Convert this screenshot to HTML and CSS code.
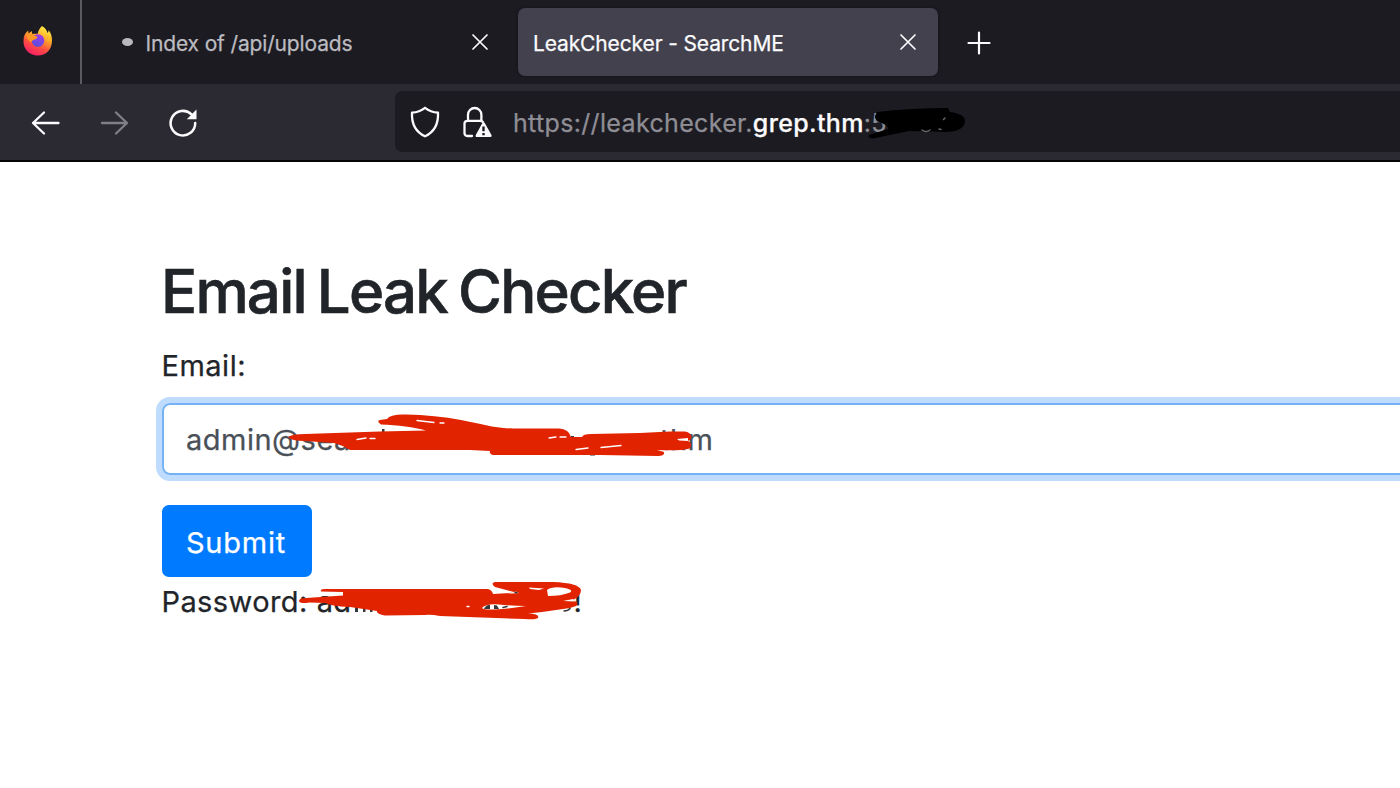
FILE: index.html
```html
<!DOCTYPE html>
<html lang="en">
<head>
<meta charset="utf-8">
<title>LeakChecker - SearchME</title>
<link rel="stylesheet" href="styles.css">
</head>
<body>
<header class="tabs">
  <div class="pinned">
    <svg class="fox" width="30" height="30" viewBox="0 0 30 30">
      <defs>
        <linearGradient id="flame" x1="0.75" y1="0" x2="0.3" y2="1"><stop offset="0" stop-color="#fff04a"/><stop offset=".35" stop-color="#ffae28"/><stop offset=".68" stop-color="#ff4b43"/><stop offset="1" stop-color="#f51c68"/></linearGradient>
        <linearGradient id="globe" x1=".7" y1="0" x2=".4" y2="1"><stop offset="0" stop-color="#a739e8"/><stop offset="1" stop-color="#554fdb"/></linearGradient>
      </defs>
      <path d="M19 0c4 2.500 5 5 5.500 7 1-.8 1.200-2 1-3 2.500 3 3.500 6 3.500 10.500 0 9-6 15-14.200 15C6 29.500.3 23 .5 15 .6 10 2 7 5.200 4.500l.4 3 3-2.500.9 3.200c1.800-.6 3.500-.6 5-.2C15.300 5 16.500 2 19 0Z" fill="url(#flame)"/>
      <circle cx="15" cy="14.500" r="6.300" fill="url(#globe)"/>
      <path d="M3 8c3-.6 6 .2 7.500 1.700 1.500-.2 3 .2 4 1.500-.5 1.600-2.700 2-4.300 3-1 .3-2 1-2.700 2C5 14.500 3.300 11 3 8Z" fill="#ff9726"/>
    </svg>
  </div>
  <div class="tab">
    <span class="loading"></span>
    <span class="tab-title idle">Index of /api/uploads</span>
    <svg class="close" width="18" height="18" viewBox="0 0 18 18"><path d="M2 2 16 16M16 2 2 16"/></svg>
  </div>
  <div class="tab active">
    <span class="tab-title">LeakChecker - SearchME</span>
    <svg class="close" width="18" height="18" viewBox="0 0 18 18"><path d="M2 2 16 16M16 2 2 16"/></svg>
  </div>
  <svg class="plus" width="24" height="24" viewBox="0 0 24 24"><path d="M12 1.500V22.500M1.500 12H22.500"/></svg>
</header>
<nav class="toolbar">
  <svg class="nav-icon back" width="30" height="26" viewBox="0 0 30 26"><path d="M27.500 13H2M13 2.500 2 13 13 23.500"/></svg>
  <svg class="nav-icon forward" width="30" height="26" viewBox="0 0 30 26"><path d="M2 13H27M16 2.500 27 13 16 23.500"/></svg>
  <svg class="nav-icon reload" width="30" height="30" viewBox="0 0 30 30"><path d="M27.200 15A12.300 12.300 0 1 1 23.500 6.400"/><path class="solid" d="M28.500 1.500V11.200H18.800Z"/></svg>
  <div class="address">
    <svg class="shield" width="30" height="32" viewBox="0 0 30 32"><path d="M15 1.800C11.500 4.500 6.700 6.300 2 6.700 1.500 17.500 6 26 15 30.300 24 26 28.500 17.500 28 6.700 23.300 6.300 18.500 4.500 15 1.800Z"/></svg>
    <svg class="lock" width="30" height="32" viewBox="0 0 30 32"><path d="M9 30H4.500Q1.500 30 1.500 27V17.500Q1.500 14.800 4.500 14.800H17Q19.500 14.800 20 16M5 14.500V8.700A6.700 6.700 0 0 1 18.400 8.700V14.500"/><path class="solid" d="M20.500 16.200Q21.300 16.200 21.900 17.200L28.500 29Q29.200 31 27.500 31H14Q12 31 12.800 29L19.200 17.200Q19.700 16.200 20.500 16.200Z"/><path class="bang" d="M20.500 20.500V25.300M20.500 27V29.200"/></svg>
    <span class="url">https://leakchecker.<b>grep.thm</b>:5</span>
  </div>
</nav>
<main class="page">
  <h1 class="heading">Email Leak Checker</h1>
  <label class="label" for="email">Email:</label>
  <div class="field" id="email"><span class="mail-start">admin@sea</span><span class="mail-end">thm</span></div>
  <button class="submit">Submit</button>
  <p class="result"><span class="pw-label">Password:</span><span class="pw-start">ad</span><span class="pw-end">!</span></p>
</main>
<svg class="ink" width="1400" height="788" viewBox="0 0 1400 788">
  <path class="crumbs-grey" d="M893 124.500h6l-3 5Z"/>
  <path class="black" d="M877 112Q910 108 948 108L950 112Q965 114 965 121 964 132 945 132Q922 131 909 131L873 138.500Q867 138 869 135L888 129Q889 127 884 124 874 121 875 116Z"/>
  <path class="grey-line" d="M922 130q4 3 8 0M939 129l2 .5M943.500 119.500l1.500-1.500"/>
  <path class="crumbs-dark" d="M382 429h2.500v5h-2.500ZM571 436h3v2h-3ZM592 434h9v2h-9ZM590 454h5v1.500h-5Z"/>
  <path class="red" d="M288 437Q292 434 305 434L380 431.500 426 430.500C414 427 398 425 381 424.500Q376 421 380 420L387 419Q390 414 406 414.500 435 415 461 420C482 424 493 428 513 428.500H559Q569 429 571 437H582Q583 434 591 434L640 433 670 431.500H685Q693 433 691 439L688 441Q693 443 690 448 687 451 657 450L664 452Q665 456 658 456L600 455 493 455Q489 454 490 451L470 450H350Q342 445 334 443L305 441Q291 441 288 437Z"/>
  <path class="white-line" d="M417 420.500 434 422.500M440 423h4M357 439.500 366 438M370 438.500h5M549 438 556 437M560 437h6M576 449.500 588 448M601 447.500 621 445.500"/>
  <path class="white-solid" d="M677 439 688 438 688 441 679 440.500Z"/>
  <path class="crumbs-dark" d="M355 605h3v7h-3ZM363 607h2.500v5h-2.500ZM370 608h2.500v4h-2.500ZM446 613h4v3h-4Z"/>
  <path class="red" d="M299 601Q299 598 306 598L343 595.500V592L321 591.500Q320 589 324 589L488 589Q492 590 493 594L516 592.500 495 587Q490 583 495 582L553 582Q579 583 581 590 581 596 573 600 580 603 576 606L570 608 542 612 528 613.500Q540 614 538 618 535 620 525 619L440 616Q430 614 425 615L385 615.500Q376 614 377 611L350 607Q330 606 326 603L309 602.500Q300 604 299 601Z"/>
  <path class="white-solid" d="M529 587.500 544 588.500 539 590 530 589ZM547 590Q552 586 565 588 574 590 570 592.500 561 596 548 596ZM508 593.500 516 591.500 519 593 512 593.500ZM563 601 573 599 575 601.500ZM482 608Q486 603.500 499 604.500 507 605.500 526 606 512 608.500 494 609.500 484 610 482 608Z"/>
  <path class="dark-solid" d="M484 609Q486 604.500 490 605V609ZM494 605 497 605.500 499 609 494 609Z"/>
  <path class="dark-line" d="M503 607.500l4-1M564 611q4 0 6-2.500M515 592.500h2"/>
  <path class="white-line" d="M467 606.500h2"/>
</svg>
</body>
</html>
```
FILE: styles.css
```css
* { box-sizing: border-box; }
body { margin: 0; width: 1400px; height: 788px; overflow: hidden; position: relative; background: #fff; font-family: Inter, "Liberation Sans", sans-serif; color: #212529; }
svg { flex: none; fill: none; stroke-linecap: round; stroke-linejoin: round; }
.tabs { height: 84px; display: flex; align-items: center; background: #1c1b22; }
.pinned { width: 81.500px; height: 84px; border-right: 2px solid #5b5a61; display: flex; align-items: center; padding: 0 0 2px 23px; }
.tab { width: 420px; height: 68px; display: flex; align-items: center; padding: 0 21px 0 15px; color: #fbfbfe; border-radius: 7px; }
.tab:not(.active) { width: 436.500px; padding: 0 29px 0 40px; }
.active { background: #42414d; box-shadow: 0 0 3px #101014; }
.loading { width: 11px; height: 8px; border-radius: 50%; background: #b9b8bd; margin: 0 13px 1px 0; }
.tab-title { flex: 1; font-size: 21px; line-height: 28px; padding-top: 4px; white-space: nowrap; letter-spacing: -.13px; -webkit-text-stroke: .25px currentColor; }
.idle { color: #bcbbc0; letter-spacing: -.15px; }
.close { stroke: #fbfbfe; stroke-width: 1.700; }
.plus { margin: 2px 0 0 29px; stroke: #fbfbfe; stroke-width: 2.200; }
.toolbar { height: 78px; display: flex; align-items: center; padding-left: 31px; background: #2b2a33; border-bottom: 2px solid #060608; }
.nav-icon { margin-top: 2px; stroke: #fbfbfe; stroke-width: 2.300; }
.forward { margin-left: 39px; stroke: #807f86; }
.reload { margin-left: 38px; stroke-width: 2.500; }
.solid { fill: #fbfbfe; stroke: none; }
.address { margin-left: 197px; flex: 1; height: 61px; margin-bottom: 1px; display: flex; align-items: center; padding-left: 15px; background: #1c1b22; border-radius: 7px 0 0 7px; }
.shield, .lock { margin-top: 1px; stroke: #fbfbfe; stroke-width: 2.300; }
.lock { margin-left: 23px; }
.bang { stroke: #1c1b22; stroke-width: 2.400; stroke-linecap: butt; }
.url { margin-left: 20px; padding-top: 3px; color: #8f8e95; font-size: 25px; line-height: 32px; letter-spacing: .34px; white-space: nowrap; -webkit-text-stroke: .25px currentColor; }
.url b { color: #fbfbfe; font-weight: 500; }
.page { padding: 93px 0 0 162px; display: flex; flex-direction: column; align-items: flex-start; }
.heading { margin: 0 0 0 -1px; font-size: 60px; line-height: 72px; font-weight: 500; letter-spacing: -1.800px; word-spacing: -3.200px; white-space: nowrap; -webkit-text-stroke: .6px currentColor; }
.label { margin: 16px 0 0 -.5px; font-size: 29px; line-height: 45px; letter-spacing: .5px; }
.label, .field, .result { -webkit-text-stroke: .25px currentColor; }
.field { width: 1260px; height: 72px; margin-top: 15px; padding: 0 22px; display: flex; align-items: center; border: 2px solid #73b2f5; border-radius: 8px; box-shadow: 0 0 0 6px #bfdcff; color: #495057; font-size: 29px; letter-spacing: .5px; }
.mail-end { margin-left: 309px; }
.submit { width: 150px; height: 72px; margin-top: 30px; padding: 2px 2px 0 0; border: 0; border-radius: 7px; background: #007bff; color: #fff; font: 400 29px Inter, "Liberation Sans", sans-serif; letter-spacing: .8px; -webkit-text-stroke: .25px currentColor; }
.result { margin: 2px 0 0 -.5px; display: flex; font-size: 29px; line-height: 45px; letter-spacing: .4px; }
.pw-start { margin-left: 9px; }
.pw-end { margin-left: 222px; }
.ink { position: absolute; left: 0; top: 0; pointer-events: none; }
.black { fill: #000; }
.red { fill: #e12300; }
.crumbs-grey { fill: #8f8e95; }
.crumbs-dark, .dark-solid { fill: #34383c; }
.grey-line { stroke: #65656c; stroke-width: 1.500; }
.dark-line { stroke: #34383c; stroke-width: 1.500; }
.white-line { stroke: #fff; stroke-width: 1.300; }
.white-solid { fill: #fff; }
```
